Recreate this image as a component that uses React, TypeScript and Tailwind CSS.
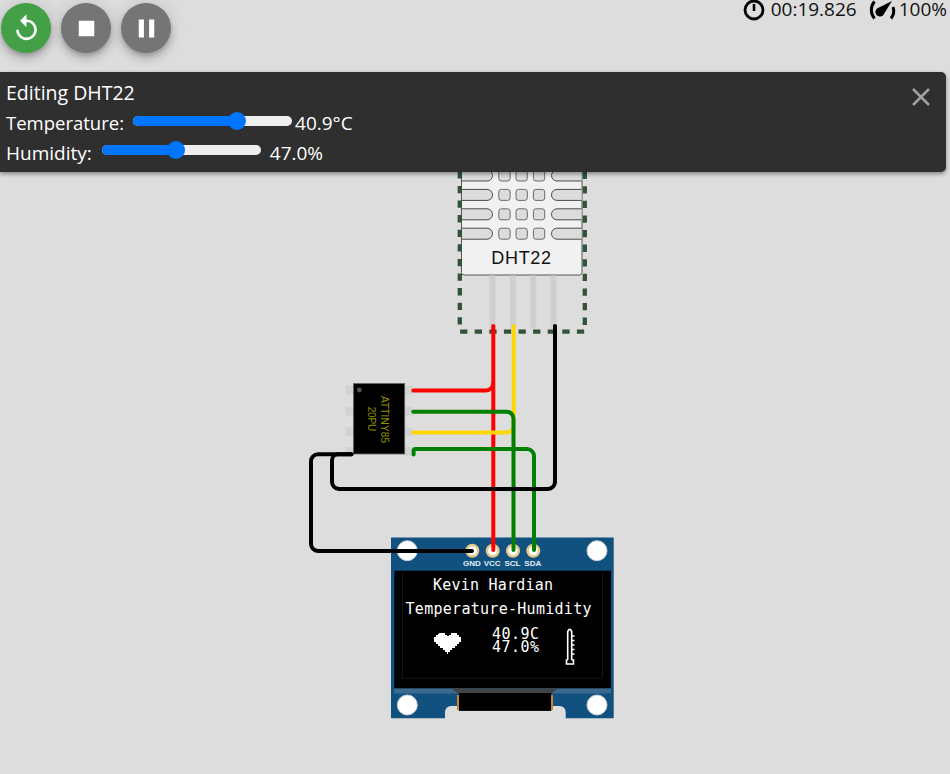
const font = { fontFamily: '"Open Sans", "Noto Sans", sans-serif' }

function RoundButton({ color, children }: { color: string; children: React.ReactNode }) {
  return (
    <button
      className={`flex h-[50px] w-[50px] items-center justify-center rounded-full shadow-[0_3px_5px_-1px_rgba(0,0,0,0.2),0_6px_10px_0_rgba(0,0,0,0.14),0_1px_18px_0_rgba(0,0,0,0.12)] ${color}`}
    >
      {children}
    </button>
  )
}

function Icon({ d }: { d: string }) {
  return (
    <svg width="31" height="31" viewBox="0 0 24 24" fill="#fff">
      <path d={d} />
    </svg>
  )
}

function Slider({ percent, className }: { percent: number; className: string }) {
  return (
    <div className={`relative h-[10px] w-[159px] rounded-[5px] bg-[#efefef] ${className}`}>
      <div className="h-full rounded-l-[5px] bg-[#0075ff]" style={{ width: `${percent}%` }} />
      <div
        className="absolute top-[-4px] ml-[-9px] h-[18px] w-[18px] rounded-full bg-[#0075ff]"
        style={{ left: `${percent}%` }}
      />
    </div>
  )
}

function Circuit() {
  const slotRows = [170, 189.4, 208.8, 228.2]
  const pins = [492.5, 513, 533.3, 553.6]
  const chipPins = [386, 406.7, 427.3, 447]
  const headers = [
    { x: 472.3, name: "GND" },
    { x: 492.7, name: "VCC" },
    { x: 513, name: "SCL" },
    { x: 533.3, name: "SDA" },
  ]
  const holes = [
    [407.3, 550.7],
    [597, 550.7],
    [407.3, 705],
    [597, 705],
  ]
  const mono = '"DejaVu Sans Mono", monospace'
  const sans = '"Liberation Sans", sans-serif'

  return (
    <svg className="absolute left-0 top-0" width="950" height="774" viewBox="0 0 950 774">
      {/* DHT22 */}
      <path d="M461.5 160H582V272.5a2.5 2.5 0 0 1-2.5 2.5H464a2.5 2.5 0 0 1-2.5-2.5z" fill="#f1f1f1" stroke="#555" strokeWidth="1" />
      {slotRows.map((y) => (
        <g key={y} fill="#dcdcdc" stroke="#4a4a4a" strokeWidth="1">
          <path d={`M462 ${y}H487a5.5 5.5 0 0 1 5.5 5.5a5.5 5.5 0 0 1-5.5 5.5H462`} />
          <path d={`M581.5 ${y}H557a5.5 5.5 0 0 0-5.5 5.5a5.5 5.5 0 0 0 5.5 5.5H581.5`} />
          {[498.8, 516, 533.4].map((x) => (
            <rect key={x} x={x} y={y} width="11.3" height="11" rx="2.5" stroke="#6a6a6a" />
          ))}
        </g>
      ))}
      <text x="521.5" y="264" textAnchor="middle" fontSize="18" letterSpacing="0.7" fontFamily={sans} fill="#111">
        DHT22
      </text>
      {pins.map((x) => (
        <rect key={x} x={x - 3} y="275.5" width="6" height="53" fill="#cfcfcf" />
      ))}
      <rect x="459.8" y="140" width="125" height="191.6" fill="none" stroke="#33523a" strokeWidth="4.3" strokeDasharray="7.3 7.3" strokeDashoffset="4" />

      {/* ATtiny85 */}
      {chipPins.map((y) => (
        <g key={y} fill="#d2d2d2">
          <rect x="345.7" y={y} width="8" height="8.7" />
          <rect x="404.5" y={y} width="8" height="8.7" />
        </g>
      ))}
      <rect x="353.4" y="383.5" width="51.3" height="70.5" fill="#000" stroke="#666" strokeWidth="0.8" />
      <circle cx="359.3" cy="390" r="2.4" fill="#555" />
      <text transform="translate(380.7 396) rotate(90)" fontSize="10" textLength="47" fontFamily={sans} fill="#8f8f00">
        ATTINY85
      </text>
      <text transform="translate(368 406.7) rotate(90)" fontSize="10" textLength="24.5" fontFamily={sans} fill="#8f8f00">
        20PU
      </text>

      {/* OLED board */}
      <path
        d="M391 537.5H613.7V718.3H565.7V712a6 6 0 0 0-6-6H551V710.7H459V706H451a6 6 0 0 0-6 6V718.3H391z"
        fill="#11517f"
      />
      <rect x="394.3" y="688" width="216.7" height="5.5" fill="#3a6a8e" />
      <rect x="394.3" y="570.7" width="216.7" height="117.6" fill="#000" />
      <path d="M451 688.5H558L551 693.5H458z" fill="#444" />
      <rect x="458.8" y="693" width="92.5" height="17.8" fill="#000" />
      <rect x="457" y="695" width="2" height="15" fill="#c8862e" />
      <rect x="551" y="695" width="2" height="15" fill="#c8862e" />
      <path d="M402.5 572V678.3H602.5V572" fill="none" stroke="#1c1c1c" strokeWidth="0.8" />
      {holes.map(([x, y]) => (
        <circle key={`${x}-${y}`} cx={x} cy={y} r="10" fill="#fff" stroke="#c8d0d8" strokeWidth="1" />
      ))}
      {headers.map((h) => (
        <g key={h.name}>
          <circle cx={h.x} cy="550.7" r="5.8" fill="#fff" stroke="#e6c88f" strokeWidth="2.5" />
          <text x={h.x - 0.5} y="566" textAnchor="middle" fontSize="8" fontWeight="700" fontFamily={sans} fill="#e6edf3">
            {h.name}
          </text>
        </g>
      ))}
      <g fill="#fff" fontFamily={mono} fontSize="15">
        <text x="433" y="590" textLength="120">Kevin Hardian</text>
        <text x="405.5" y="614" textLength="186">Temperature-Humidity</text>
        <text x="492" y="639" textLength="47">40.9C</text>
        <text x="492" y="651.5" textLength="47">47.0%</text>
      </g>
      {/* heart */}
      <path
        fill="#fff"
        shapeRendering="crispEdges"
        d="M439 633h6v2h2v1h2v-1h2v-2h6v2h2v2h2v5h-2v2h-2v2h-2v2h-3v2h-2v2h-2v2h-1v-2h-2v-2h-2v-2h-3v-2h-2v-2h-2v-2h-2v-5h2v-2h2z"
      />
      {/* thermometer */}
      <g fill="none" stroke="#fff" strokeWidth="1.6">
        <path d="M567.7 660V631.5L569 629.5H570.5L571.7 631.5V660M567.7 660H566.5V664H573.5V660H571.7" />
        <path d="M572 636h2.5M572 640.5h2.5M572 645h2.5M572 649.5h2.5M572 654h2.5" />
      </g>

      {/* wires */}
      <g fill="none" strokeWidth="4" strokeLinecap="round">
        <path stroke="#ff0000" d="M493.3 326V550" />
        <path stroke="#ff0000" d="M413.3 390.4H486a7 7 0 0 0 7-7" />
        <path stroke="#ffd700" d="M513.7 326V425.5a7 7 0 0 1-7 7H413.3" />
        <path stroke="#008000" d="M413.3 411.7H506.5a7 7 0 0 1 7 7V550" />
        <path stroke="#008000" d="M413.6 454.5V451a2 2 0 0 1 2-2H527a7 7 0 0 1 7 7V550" />
        <path stroke="#000" d="M351.5 454.3H318a7 7 0 0 0-7 7V544a7 7 0 0 0 7 7H472" />
        <path stroke="#000" d="M351.5 454.3H338a6 6 0 0 0-6 6V482a7 7 0 0 0 7 7H548a7 7 0 0 0 7-7V326" />
      </g>
    </svg>
  )
}

export default function App() {
  return (
    <div className="relative h-[774px] w-[950px] overflow-hidden bg-[#dddddd] text-[19px]" style={font}>
      <Circuit />

      <div className="relative flex items-start justify-between pl-px pr-[3px]">
        <div className="flex gap-[10px] pt-[3px]">
          <RoundButton color="bg-[#43a047]">
            <Icon d="M12 5V1L7 6l5 5V7c3.31 0 6 2.69 6 6s-2.69 6-6 6-6-2.69-6-6H4c0 4.42 3.58 8 8 8s8-3.58 8-8-3.58-8-8-8z" />
          </RoundButton>
          <RoundButton color="bg-[#757575]">
            <Icon d="M6 6h12v12H6z" />
          </RoundButton>
          <RoundButton color="bg-[#757575]">
            <Icon d="M6 19h4V5H6v14zm8-14v14h4V5h-4z" />
          </RoundButton>
        </div>
        <div className="flex items-start leading-[18px] text-[#111]">
          <svg width="24" height="22" viewBox="0 0 24 22" className="mr-[5px]">
            <circle cx="12" cy="10" r="9" fill="none" stroke="#000" strokeWidth="2.8" />
            <path d="M12 4v7" stroke="#000" strokeWidth="2.6" />
            <path d="M9 0h6" stroke="#000" strokeWidth="2" />
          </svg>
          <span>00:19.826</span>
          <svg width="30" height="22" viewBox="0 0 30 22" className="ml-[10px] mr-[2px]">
            <path d="M7.5 1.5a13 13 0 0 0 0 17" fill="none" stroke="#000" strokeWidth="3" />
            <path d="M26 7a12 12 0 0 1-2 11.5" fill="none" stroke="#000" strokeWidth="3" />
            <path d="M25 1L10 8.5a4.5 4.5 0 0 0 6 7z" fill="#000" />
          </svg>
          <span>100%</span>
        </div>
      </div>

      <div className="absolute left-0 top-[72px] h-[100px] w-[946px] rounded-r-[5px] bg-[#2f2f2f] pl-[6px] pt-[8px] text-white shadow-[0_2px_4px_rgba(0,0,0,0.4)]">
        <div className="flex h-[26px] items-center text-[19.5px]">Editing DHT22</div>
        <div className="mt-[2px] flex h-[30px] items-center">
          <span className="text-[18.5px]">Temperature:</span>
          <Slider percent={65.4} className="ml-[9px] mt-[-5px]" />
          <span className="ml-[3px]">40.9°C</span>
        </div>
        <div className="flex h-[30px] items-center">
          <span>Humidity:</span>
          <Slider percent={47} className="ml-[10px] mt-[-6px]" />
          <span className="ml-[9px]">47.0%</span>
        </div>
        <svg className="absolute right-[16px] top-[16px]" width="18" height="18" viewBox="0 0 18 18">
          <path d="M1 1L17 17M17 1L1 17" stroke="#a0a0a0" strokeWidth="2.5" />
        </svg>
      </div>
    </div>
  )
}
